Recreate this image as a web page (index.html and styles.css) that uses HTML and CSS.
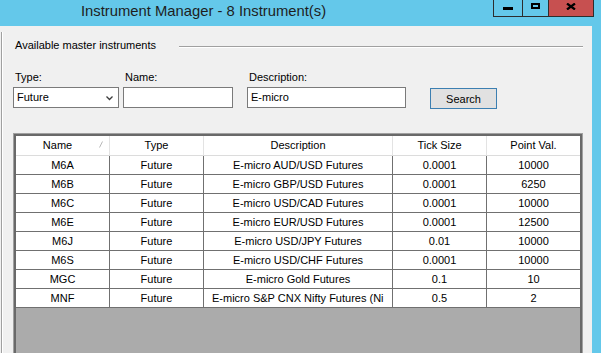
FILE: index.html
```html
<!DOCTYPE html>
<html lang="en">
<head>
    <meta charset="UTF-8">
    <meta name="viewport" content="width=device-width, initial-scale=1.0">
    <title>Instrument Manager</title>
    <link rel="stylesheet" href="styles.css">
</head>
<body>
    <div class="window">
        <div class="titlebar">
            <div class="title">Instrument Manager - 8 Instrument(s)</div>
            <div class="caption-buttons">
                <div class="cap-btn btn-min"><span class="glyph-min"></span></div>
                <div class="cap-btn btn-max"><span class="glyph-max"></span></div>
                <div class="cap-btn btn-close">
                    <svg width="10" height="7" viewBox="0 0 10 7"><path d="M1 0.5 L9 6.5 M9 0.5 L1 6.5" stroke="#000" stroke-width="2.2" fill="none"/></svg>
                </div>
            </div>
        </div>
        <div class="frame">
            <div class="client">
                <div class="group">
                    <div class="group-title">
                        <span>Available master instruments</span>
                        <div class="group-line"></div>
                    </div>

                    <div class="filters">
                        <div class="field field-type">
                            <label>Type:</label>
                            <div class="combo">
                                <span>Future</span>
                                <svg width="7" height="5" viewBox="0 0 7 5"><path d="M0.5 0.5 L3.5 3.5 L6.5 0.5" stroke="#3c3c3c" stroke-width="1.3" fill="none"/></svg>
                            </div>
                        </div>
                        <div class="field field-name">
                            <label>Name:</label>
                            <div class="text-input"></div>
                        </div>
                        <div class="field field-desc">
                            <label>Description:</label>
                            <div class="text-input">E-micro</div>
                        </div>
                        <button class="search-btn">Search</button>
                    </div>

                    <div class="grid">
                        <div class="grid-inner">
                            <div class="grid-row grid-head">
                                <div class="cell cell-sorted">Name
                                    <svg class="sort-glyph" width="5" height="7" viewBox="0 0 5 7"><path d="M0.5 6.5 L3.5 0.5" stroke="#b8b8b8" stroke-width="1" fill="none"/></svg>
                                </div>
                                <div class="cell">Type</div>
                                <div class="cell">Description</div>
                                <div class="cell">Tick Size</div>
                                <div class="cell">Point Val.</div>
                            </div>
                            <div class="grid-row">
                                <div class="cell">M6A</div><div class="cell">Future</div><div class="cell">E-micro AUD/USD Futures</div><div class="cell">0.0001</div><div class="cell">10000</div>
                            </div>
                            <div class="grid-row">
                                <div class="cell">M6B</div><div class="cell">Future</div><div class="cell">E-micro GBP/USD Futures</div><div class="cell">0.0001</div><div class="cell">6250</div>
                            </div>
                            <div class="grid-row">
                                <div class="cell">M6C</div><div class="cell">Future</div><div class="cell">E-micro USD/CAD Futures</div><div class="cell">0.0001</div><div class="cell">10000</div>
                            </div>
                            <div class="grid-row">
                                <div class="cell">M6E</div><div class="cell">Future</div><div class="cell">E-micro EUR/USD Futures</div><div class="cell">0.0001</div><div class="cell">12500</div>
                            </div>
                            <div class="grid-row">
                                <div class="cell">M6J</div><div class="cell">Future</div><div class="cell">E-micro USD/JPY Futures</div><div class="cell">0.01</div><div class="cell">10000</div>
                            </div>
                            <div class="grid-row">
                                <div class="cell">M6S</div><div class="cell">Future</div><div class="cell">E-micro USD/CHF Futures</div><div class="cell">0.0001</div><div class="cell">10000</div>
                            </div>
                            <div class="grid-row">
                                <div class="cell">MGC</div><div class="cell">Future</div><div class="cell">E-micro Gold Futures</div><div class="cell">0.1</div><div class="cell">10</div>
                            </div>
                            <div class="grid-row">
                                <div class="cell">MNF</div><div class="cell">Future</div><div class="cell cell-clip">E-micro S&amp;P CNX Nifty Futures (Ni</div><div class="cell">0.5</div><div class="cell">2</div>
                            </div>
                        </div>
                    </div>
                </div>
            </div>
        </div>
    </div>
</body>
</html>
```

FILE: styles.css
```css
body, html {
    margin: 0;
    padding: 0;
    width: 100%;
    height: 100%;
    overflow: hidden;
    background: #64c8ea;
    font-family: "Liberation Sans", Arial, sans-serif;
    font-size: 11px;
    color: #000;
}

.window {
    width: 601px;
    height: 353px;
    display: flex;
    flex-direction: column;
}

/* title bar */
.titlebar {
    height: 26px;
    flex-shrink: 0;
    display: flex;
}

.title {
    flex: 1;
    padding-left: 81px;
    font-size: 14.8px;
    line-height: 22px;
    color: #1e1e1e;
    white-space: nowrap;
}

.caption-buttons {
    display: flex;
    height: 16px;
    border: 1px solid #2d2d2d;
    border-top: none;
    margin-right: 7px;
}

.cap-btn {
    display: flex;
    justify-content: center;
    align-items: flex-start;
    border-left: 1px solid #2d2d2d;
}

.cap-btn:first-child {
    border-left: none;
}

.btn-min {
    width: 28px;
}

.btn-max {
    width: 25px;
}

.btn-close {
    width: 44px;
    background: #c75050;
}

.glyph-min {
    width: 10px;
    height: 3px;
    background: #000;
    margin-top: 7px;
}

.glyph-max {
    width: 9px;
    height: 6px;
    box-sizing: border-box;
    border: 2px solid #000;
    margin-top: 3px;
}

.btn-close svg {
    margin-top: 3px;
}

/* client area */
.frame {
    flex: 1;
    display: flex;
    min-height: 0;
}

.client {
    width: 592px;
    box-sizing: border-box;
    background: #f0f0f0;
    padding-left: 1px;
    display: flex;
    flex-direction: column;
    overflow: hidden;
}

.group {
    flex: 1;
    margin-top: 6px;
    border-left: 1px solid #a0a0a0;
    box-shadow: inset 1px 0 #fff;
    padding: 0 9px 0 11px;
    display: flex;
    flex-direction: column;
}

.group-title {
    display: flex;
    height: 14px;
    line-height: 14px;
    margin-top: 6px;
    padding-left: 2px;
    white-space: nowrap;
}

.group-line {
    flex: 1;
    align-self: flex-start;
    height: 2px;
    box-sizing: border-box;
    border-top: 1px solid #a0a0a0;
    border-bottom: 1px solid #fff;
    margin-top: 8px;
    margin-left: 23px;
}

/* filters */
.filters {
    display: flex;
    align-items: flex-end;
    margin-top: 18px;
}

.field {
    display: flex;
    flex-direction: column;
    gap: 3px;
}

.field label {
    padding-left: 2px;
    line-height: 14px;
}

.combo,
.text-input {
    height: 21px;
    box-sizing: border-box;
    border: 1px solid #7a7a7a;
    background: #fff;
    padding-left: 3px;
    line-height: 19px;
    white-space: nowrap;
}

.combo {
    display: flex;
    justify-content: space-between;
    align-items: center;
}

.combo svg {
    margin-right: 5px;
    margin-top: 1px;
}

.field-type {
    width: 106px;
}

.field-name {
    width: 110px;
    margin-left: 4px;
}

.field-desc {
    width: 159px;
    margin-left: 14px;
}

.search-btn {
    width: 67px;
    height: 21px;
    margin-left: 24px;
    margin-bottom: -1px;
    padding: 0;
    box-sizing: border-box;
    border: 1px solid #3c7fb1;
    background: #e1e1e1;
    font-family: inherit;
    font-size: 11px;
    color: #000;
}

/* data grid */
.grid {
    flex-shrink: 0;
    height: 240px;
    margin-top: 25px;
    border: 1px solid #a0a0a0;
}

.grid-inner {
    height: 100%;
    box-sizing: border-box;
    border: 2px solid #696969;
    background: #ababab;
}

.grid-row {
    display: grid;
    grid-template-columns: 94px 94px 189px 94px 93px;
    background: #fff;
}

.cell {
    height: 19px;
    box-sizing: border-box;
    border-right: 1px solid #707070;
    border-bottom: 1px solid #707070;
    line-height: 18px;
    text-align: center;
    white-space: nowrap;
    overflow: hidden;
}

.cell:last-child {
    border-right: none;
}

.grid-head .cell {
    height: 20px;
    line-height: 19px;
    border-right-color: #e3e3e3;
    border-bottom-color: #dcdcdc;
}

.cell-sorted {
    position: relative;
    padding-right: 10px;
}

.sort-glyph {
    position: absolute;
    top: 5px;
    left: 83px;
}

.cell-clip {
    text-align: left;
    padding-left: 8px;
}
```
